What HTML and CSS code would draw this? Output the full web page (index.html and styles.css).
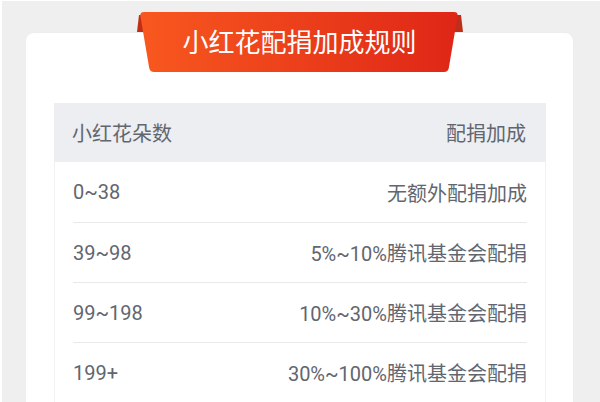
FILE: index.html
```html
<!DOCTYPE html>
<html lang="zh-CN">
<head>
<meta charset="utf-8">
<title>小红花配捐加成规则</title>
<link rel="stylesheet" href="styles.css">
</head>
<body>
<div class="page">
  <div class="ribbon">
    <svg class="ribbon-bg" width="326" height="62" viewBox="0 0 326 62" aria-hidden="true">
      <defs>
        <linearGradient id="rg" x1="0" y1="0" x2="1" y2="0">
          <stop offset="0" stop-color="#f8581f"/>
          <stop offset="1" stop-color="#df2617"/>
        </linearGradient>
      </defs>
      <polygon points="2,4 324,4 326,21 0,21" fill="#bf2e17"/>
      <path d="M7,1 H317 Q321,1 320.6,5 L311.8,57 Q311,61 307,61 H17 Q13,61 12.2,57 L3.4,5 Q3,1 7,1 Z" fill="url(#rg)"/>
    </svg>
    <span class="ribbon-title">小红花配捐加成规则</span>
  </div>
  <div class="card">
    <div class="table">
      <div class="thead">
        <span>小红花朵数</span>
        <span>配捐加成</span>
      </div>
      <div class="row"><span>0~38</span><span>无额外配捐加成</span></div>
      <div class="row"><span>39~98</span><span>5%~10%腾讯基金会配捐</span></div>
      <div class="row"><span>99~198</span><span>10%~30%腾讯基金会配捐</span></div>
      <div class="row"><span>199+</span><span>30%~100%腾讯基金会配捐</span></div>
    </div>
  </div>
</div>
</body>
</html>
```
FILE: styles.css
```css
html, body {
  margin: 0;
  padding: 0;
  background: #efefef;
  height: 100%;
  overflow: hidden;
}
body {
  font-family: Roboto, "Noto Sans CJK SC", sans-serif;
}
.page {
  box-sizing: border-box;
  height: 100vh;
  display: flex;
  flex-direction: column;
  border-top: 1px solid #ffffff;
  border-left: 2px solid #ffffff;
  padding: 10px 27px 0 24px;
}
.ribbon {
  position: relative;
  z-index: 2;
  flex: none;
  width: 326px;
  height: 62px;
  margin: 0 auto -40px;
  display: flex;
  align-items: center;
  justify-content: center;
}
.ribbon-bg {
  position: absolute;
  left: 0;
  top: 0;
}
.ribbon-title {
  position: relative;
  color: #ffffff;
  font-size: 26px;
  line-height: 30px;
  margin-top: 1px;
}
.card {
  position: relative;
  z-index: 1;
  flex: 1;
  min-height: 0;
  overflow: hidden;
  display: flex;
  flex-direction: column;
  background: #ffffff;
  border-radius: 8px 8px 0 0;
  padding: 70px 27px 0 28px;
  box-shadow: 0 0 2px rgba(0, 0, 0, 0.03);
}
.table {
  flex: 1;
  border-left: 1px solid #f2f2f2;
  border-right: 1px solid #f2f2f2;
  color: #62666f;
  font-size: 20px;
}
.thead {
  background: #eceef1;
  height: 59px;
  padding: 0 20px 0 18px;
  margin: 0 -1px;
  display: flex;
  align-items: center;
  justify-content: space-between;
}
.row {
  height: 60px;
  margin: 0 18px;
  display: flex;
  align-items: center;
  justify-content: space-between;
  box-sizing: border-box;
}
.row + .row {
  border-top: 1px solid #e9e9e9;
}
```
